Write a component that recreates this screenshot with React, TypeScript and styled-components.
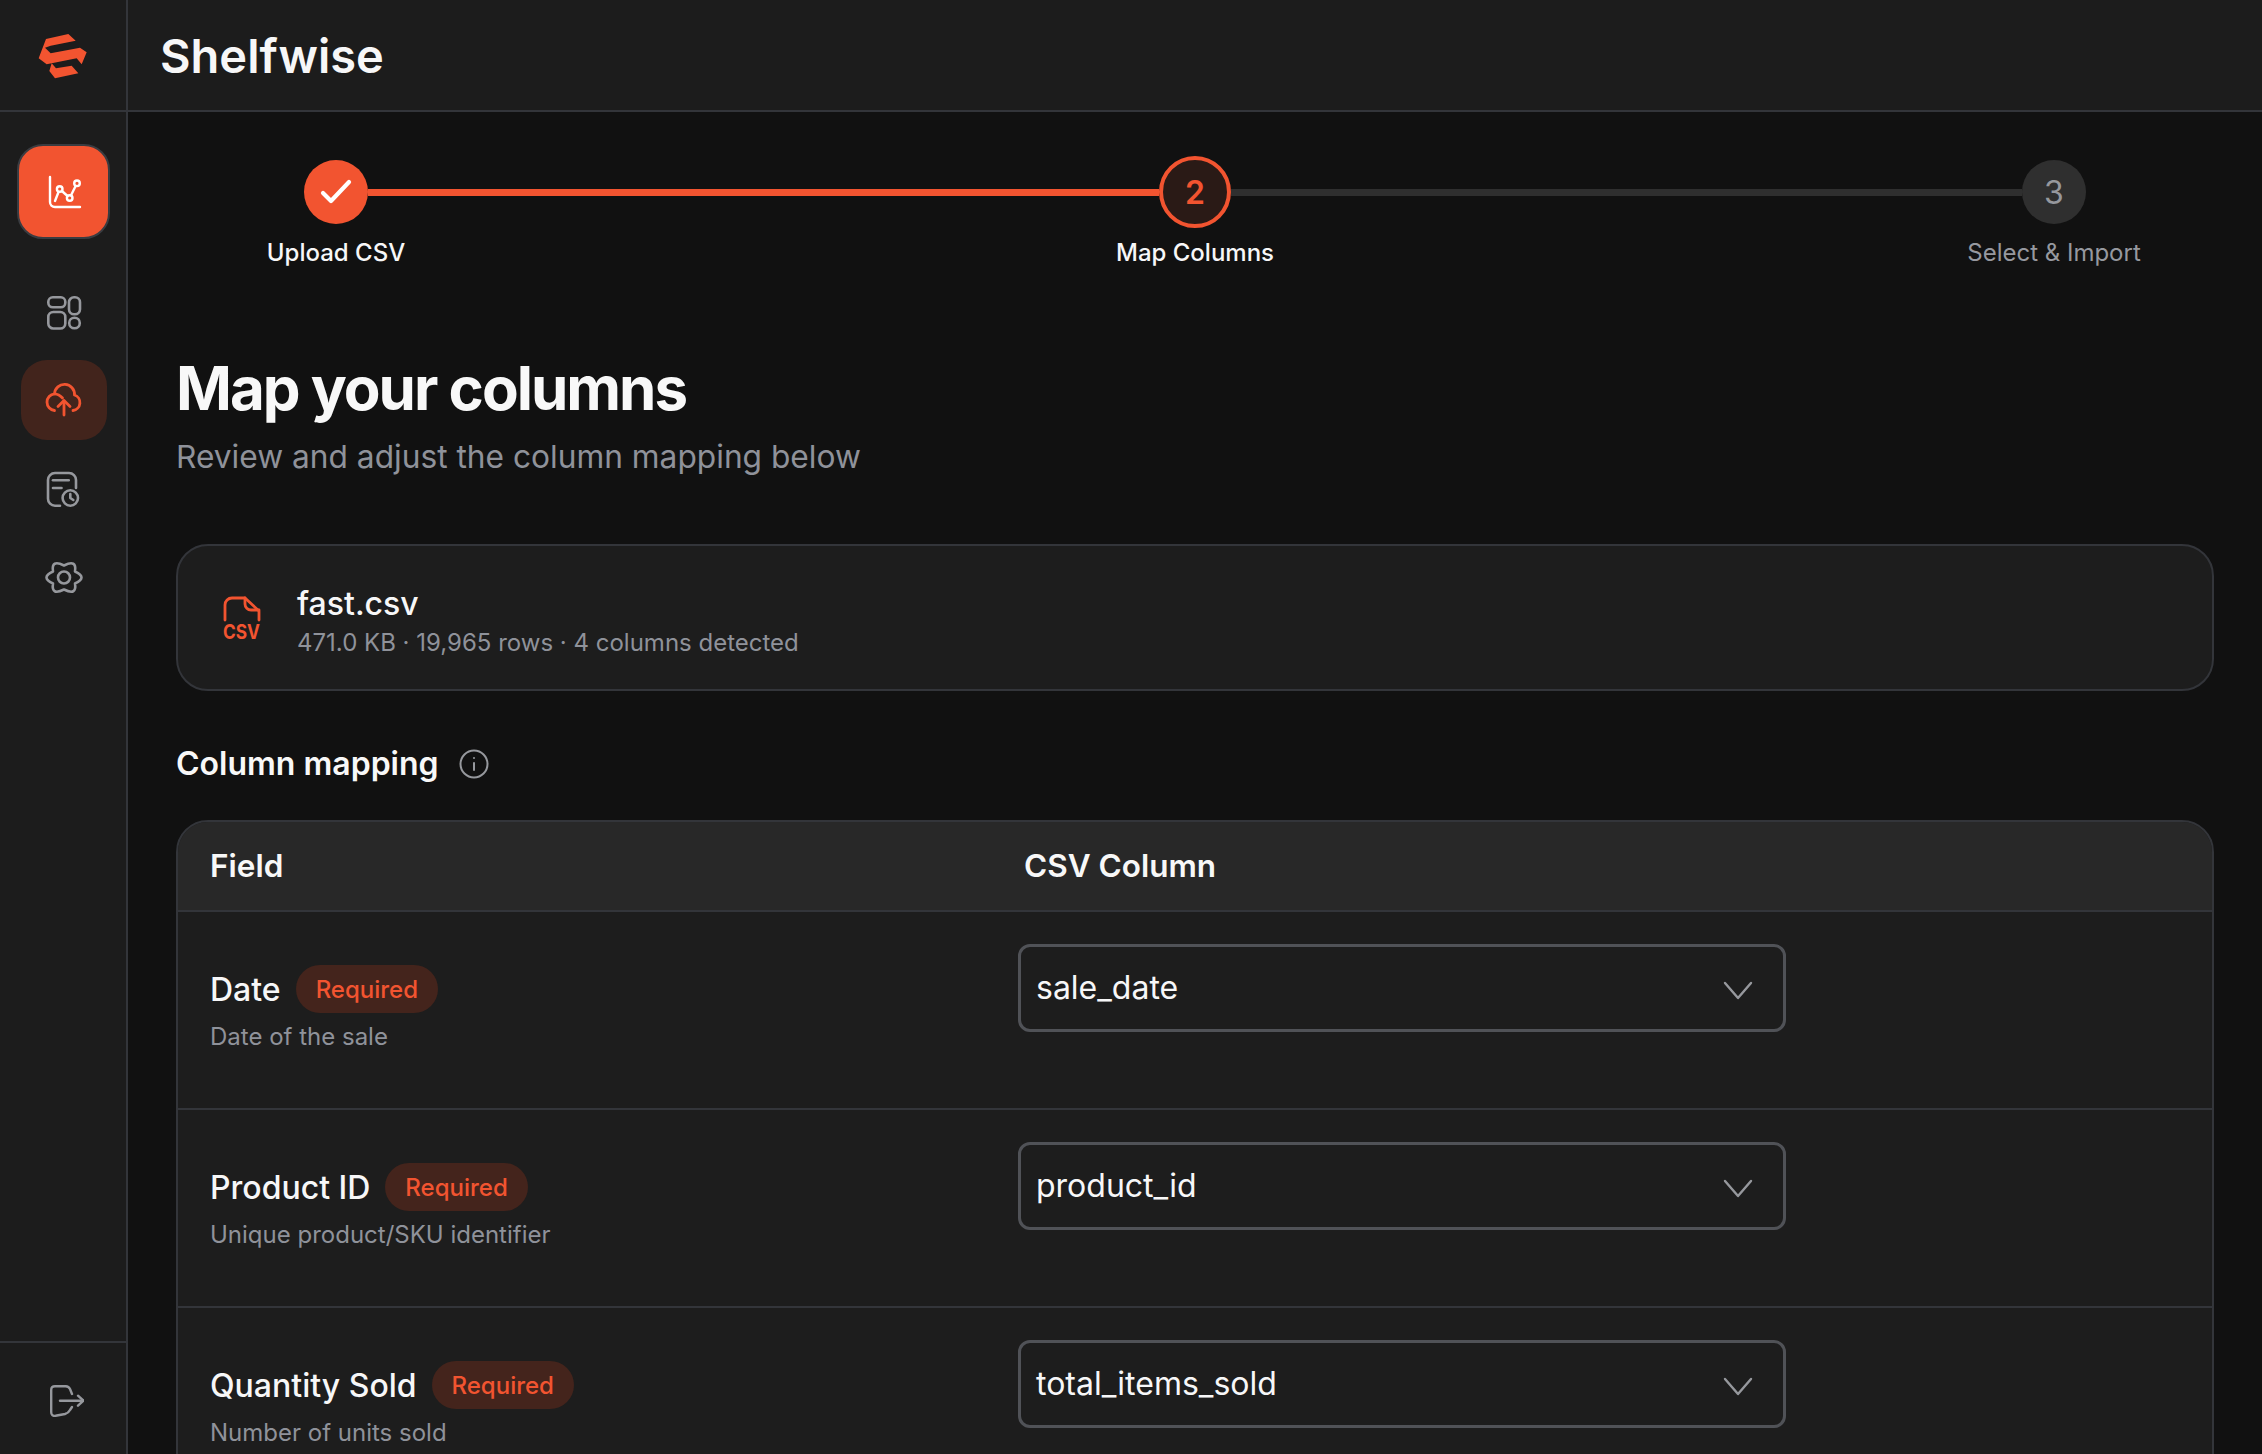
import styled, { createGlobalStyle } from "styled-components";

const ACCENT = "#f25430";

const GlobalStyle = createGlobalStyle`
    html, body {
        margin: 0;
        height: 100%;
        background: #111111;
        overflow: hidden;
        font-family: Inter, "Noto Sans", sans-serif;
    }
    * { box-sizing: border-box; }
`;

const Shell = styled.div`
    display: flex;
    height: 100vh;
    overflow: hidden;
`;

const Sidebar = styled.aside`
    display: flex;
    flex-direction: column;
    flex: 0 0 128px;
    background: #1c1c1c;
    border-right: 2px solid #33353a;
`;

const LogoCell = styled.div`
    display: flex;
    flex: 0 0 112px;
    align-items: center;
    justify-content: center;
    border-bottom: 2px solid #33353a;
`;

const Nav = styled.nav`
    display: flex;
    flex: 1;
    flex-direction: column;
    align-items: center;
    padding: 32px 0 0 1px;
`;

const NavButton = styled.div<{ $state?: "primary" | "active" }>`
    display: flex;
    align-items: center;
    justify-content: center;
    color: ${(p) => (p.$state === "primary" ? "#ffffff" : p.$state === "active" ? ACCENT : "#96989d")};
    background: ${(p) => (p.$state === "primary" ? ACCENT : p.$state === "active" ? "#42241c" : "transparent")};
    border: ${(p) => (p.$state === "primary" ? "2px solid #3a3c41" : "none")};
    border-radius: 26px;
    width: ${(p) => (p.$state === "primary" ? "93px" : "86px")};
    height: ${(p) => (p.$state === "primary" ? "95px" : p.$state === "active" ? "80px" : "88px")};
    margin-bottom: ${(p) => (p.$state === "primary" ? "30px" : p.$state === "active" ? "5px" : "0")};
    margin-top: ${(p) => (p.$state === "active" ? "3px" : "0")};

    svg {
        margin-left: ${(p) => (p.$state === "primary" ? "3px" : "0")};
        overflow: visible;
    }
`;

const SidebarFooter = styled.div`
    display: flex;
    flex: 0 0 113px;
    align-items: center;
    justify-content: center;
    padding: 4px 0 0 8px;
    border-top: 2px solid #33353a;
    color: #96989d;
`;

const Main = styled.main`
    display: flex;
    flex: 1;
    flex-direction: column;
    min-width: 0;
`;

const TopBar = styled.header`
    display: flex;
    flex: 0 0 112px;
    align-items: center;
    padding-left: 32px;
    background: #1c1c1c;
    border-bottom: 2px solid #33353a;
`;

const Brand = styled.h1`
    margin: 0;
    color: #f7f7f8;
    font-size: 47px;
    font-weight: 600;
    letter-spacing: 0;
`;

const Content = styled.div`
    display: flex;
    flex: 1;
    flex-direction: column;
    padding: 44px 48px 0;
    overflow: hidden;

    & > * {
        flex-shrink: 0;
    }
`;

const Stepper = styled.div`
    display: flex;
    flex-direction: column;
    margin-bottom: 87px;
`;

const Track = styled.div`
    display: flex;
    align-items: center;
    padding: 0 128px;
`;

const StepCircle = styled.div<{ $state: "done" | "current" | "todo" }>`
    display: flex;
    flex: none;
    align-items: center;
    justify-content: center;
    width: ${(p) => (p.$state === "current" ? "72px" : "64px")};
    height: ${(p) => (p.$state === "current" ? "72px" : "64px")};
    border-radius: 50%;
    font-size: 32px;
    font-weight: ${(p) => (p.$state === "current" ? 600 : 400)};
    color: ${(p) => (p.$state === "done" ? "#fff" : p.$state === "current" ? ACCENT : "#96989d")};
    background: ${(p) => (p.$state === "done" ? ACCENT : p.$state === "current" ? "#2a1a16" : "#2f2f2f")};
    border: ${(p) => (p.$state === "current" ? `4px solid ${ACCENT}` : "none")};
`;

const TrackLine = styled.div<{ $done?: boolean }>`
    flex: 1;
    height: 7px;
    background: ${(p) => (p.$done ? ACCENT : "#2f2f2f")};
`;

const StepLabels = styled.div`
    display: flex;
    justify-content: space-between;
    padding: 0 70px;
    margin-top: 10px;
`;

const StepLabel = styled.div<{ $muted?: boolean }>`
    display: flex;
    justify-content: center;
    width: 180px;
    color: ${(p) => (p.$muted ? "#96989f" : "#f7f7f8")};
    font-size: 24px;
    font-weight: ${(p) => (p.$muted ? 400 : 500)};
    line-height: 29px;
    white-space: nowrap;
`;

const Title = styled.h2`
    margin: 0;
    color: #f8f8f8;
    font-size: 60px;
    font-weight: 700;
    line-height: 68px;
    letter-spacing: -2px;
`;

const Subtitle = styled.p`
    margin: 15px 0 0;
    color: #8f929a;
    font-size: 31.7px;
    line-height: 40px;
`;

const FileCard = styled.section`
    display: flex;
    align-items: center;
    gap: 36px;
    height: 147px;
    margin-top: 67px;
    padding-left: 45px;
    background: #1d1d1d;
    border: 2px solid #33353a;
    border-radius: 32px;
`;

const FileText = styled.div`
    padding-top: 8px;
`;

const FileName = styled.div`
    color: #f7f7f8;
    font-size: 32px;
    font-weight: 500;
    line-height: 40px;
`;

const FileMeta = styled.div`
    margin-top: 3px;
    color: #8f929a;
    font-size: 24px;
    line-height: 32px;
`;

const SectionHead = styled.div`
    display: flex;
    align-items: center;
    gap: 20px;
    height: 40px;
    margin-top: 53px;
    color: #96989d;
`;

const SectionTitle = styled.h3`
    margin: 0;
    color: #f8f8f8;
    font-size: 32px;
    font-weight: 600;
    line-height: 40px;
`;

const Table = styled.section`
    margin-top: 36px;
    background: #1d1d1d;
    border: 2px solid #33353a;
    border-radius: 32px 32px 0 0;
    overflow: hidden;
`;

const TableHead = styled.div`
    display: grid;
    grid-template-columns: 814px 1fr;
    align-items: center;
    height: 90px;
    padding: 0 0 2px 32px;
    background: #282828;
    border-bottom: 2px solid #33353a;
`;

const HeadCell = styled.div`
    color: #f8f8f8;
    font-size: 31.5px;
    font-weight: 600;
`;

const Row = styled.div`
    display: grid;
    grid-template-columns: 808px 768px;
    height: 198px;
    padding: 32px 0 0 32px;
    border-bottom: 2px solid #33353a;
`;

const FieldLine = styled.div`
    display: flex;
    align-items: center;
    gap: 15px;
    height: 48px;
    margin-top: 21px;
`;

const FieldName = styled.div`
    color: #f7f7f8;
    font-size: 32px;
    font-weight: 500;
`;

const Badge = styled.span`
    display: inline-flex;
    align-items: center;
    height: 48px;
    padding: 0 20px;
    color: ${ACCENT};
    background: #44241c;
    border-radius: 24px;
    font-size: 24px;
    font-weight: 500;
`;

const FieldHint = styled.div`
    margin-top: 8px;
    color: #8f929a;
    font-size: 24px;
    line-height: 32px;
`;

const Select = styled.div`
    display: flex;
    align-items: center;
    justify-content: space-between;
    height: 88px;
    padding: 0 30px 2px 15px;
    color: #f7f7f8;
    background: #1d1d1d;
    border: 3px solid #505257;
    border-radius: 12px;
    font-size: 32px;
`;

const Chevron = styled.svg`
    flex: none;
    margin-top: 6px;
    color: #96989d;
`;

const Glyph = ({ w, h, sw, children }: { w: number; h: number; sw: number; children: React.ReactNode }) => (
    <svg width={w} height={h} viewBox={`0 0 ${w} ${h}`} fill="none" stroke="currentColor" strokeWidth={sw} strokeLinecap="round" strokeLinejoin="round">
        {children}
    </svg>
);

const fields = [
    { name: "Date", hint: "Date of the sale", column: "sale_date" },
    { name: "Product ID", hint: "Unique product/SKU identifier", column: "product_id" },
    { name: "Quantity Sold", hint: "Number of units sold", column: "total_items_sold" },
];

export default function App() {
    return (
        <>
            <GlobalStyle />
            <Shell>
                <Sidebar>
                    <LogoCell>
                        <svg width="66" height="60" viewBox="0 0 198 180" fill={ACCENT}>
                            <path d="M48 42 L115 27 L137 47 L62 62 L45 68 L62 85 L150 68 L170 82 L155 118 L140 100 L50 118 L26 100 Z" />
                            <path d="M65 115 L78 130 L125 122 L145 145 L75 160 L58 138 Z" />
                        </svg>
                    </LogoCell>
                    <Nav>
                        <NavButton $state="primary">
                            <Glyph w={34} h={34} sw={2.4}>
                                <path d="M2 2v25a5 5 0 0 0 5 5h25" />
                                <path d="M7 26l4.700-12 10 9L29 8.300" />
                                <circle cx="11.700" cy="14" r="2.800" fill={ACCENT} />
                                <circle cx="21.700" cy="23" r="2.800" fill={ACCENT} />
                                <circle cx="29" cy="8.300" r="2.800" fill={ACCENT} />
                            </Glyph>
                        </NavButton>
                        <NavButton>
                            <Glyph w={34} h={34} sw={2.6}>
                                <rect x="1.300" y="1.300" width="17" height="10" rx="4.500" />
                                <rect x="1.300" y="16" width="17" height="16.500" rx="5" />
                                <rect x="22" y="1.300" width="11" height="17" rx="5" />
                                <circle cx="27.500" cy="27" r="5.300" />
                            </Glyph>
                        </NavButton>
                        <NavButton $state="active">
                            <Glyph w={36} h={34} sw={2.8}>
                                <path d="M8.500 27.500a8.400 8.400 0 0 1 0-16.700A10 10 0 0 1 28.500 12a8 8 0 0 1-1.500 15.500" />
                                <path d="M8.500 10.800q4.500.2 8 4.200" />
                                <path d="M18 32V18" />
                                <path d="M12 23.500l6-6 6 6" />
                            </Glyph>
                        </NavButton>
                        <NavButton>
                            <Glyph w={33} h={35} sw={2.6}>
                                <path d="M13 33.700H8a7 7 0 0 1-7-7V8a7 7 0 0 1 7-7h14a7 7 0 0 1 7 7v8" />
                                <path d="M6 8.300h15.700" />
                                <path d="M6 16h8.500" />
                                <circle cx="23.300" cy="26" r="7.700" />
                                <path d="M23.300 22v4l3 2" />
                            </Glyph>
                        </NavButton>
                        <NavButton>
                            <Glyph w={36} h={33} sw={2.6}>
                                <path d="M18 4.500Q31-2 29 10.500 42 16.500 29 22.500 31 35 18 28.500 5 35 7 22.500-6 16.500 7 10.500 5-2 18 4.500Z" />
                                <circle cx="18" cy="16.500" r="6" />
                            </Glyph>
                        </NavButton>
                    </Nav>
                    <SidebarFooter>
                        <Glyph w={34} h={32} sw={2.4}>
                            <path d="M22 9l-2-5q-1.500-3-5-2.800H5Q1.200 1.200 1.200 5v22q0 4.500 4.300 3.800L15 29q3.500-1 5-4l2-3" />
                            <path d="M10 15.700h23.500" />
                            <path d="M28 10.700l5.500 5-5.500 5" />
                        </Glyph>
                    </SidebarFooter>
                </Sidebar>
                <Main>
                    <TopBar>
                        <Brand>Shelfwise</Brand>
                    </TopBar>
                    <Content>
                        <Stepper>
                            <Track>
                                <StepCircle $state="done">
                                    <svg width="32" height="26" viewBox="0 0 32 26" fill="none" stroke="#fff" strokeWidth="4.200" strokeLinecap="round" strokeLinejoin="round">
                                        <path d="M3 14l8 8L29 3" />
                                    </svg>
                                </StepCircle>
                                <TrackLine $done />
                                <StepCircle $state="current">2</StepCircle>
                                <TrackLine />
                                <StepCircle $state="todo">3</StepCircle>
                            </Track>
                            <StepLabels>
                                <StepLabel>Upload CSV</StepLabel>
                                <StepLabel>Map Columns</StepLabel>
                                <StepLabel $muted>Select &amp; Import</StepLabel>
                            </StepLabels>
                        </Stepper>
                        <Title>Map your columns</Title>
                        <Subtitle>Review and adjust the column mapping below</Subtitle>
                        <FileCard>
                            <svg width="38" height="44" viewBox="0 0 38 44" fill="none" stroke={ACCENT} strokeWidth="2.800" strokeLinecap="round" strokeLinejoin="round">
                                <path d="M2 24V9a7 7 0 0 1 7-7h13l14 13v9" />
                                <path d="M22 2v6a6 6 0 0 0 6 6h8" />
                                <text x="0" y="43" fill={ACCENT} stroke="none" fontFamily="Inter, sans-serif" fontWeight="700" fontSize="20" textLength="37" lengthAdjust="spacingAndGlyphs">CSV</text>
                            </svg>
                            <FileText>
                                <FileName>fast.csv</FileName>
                                <FileMeta>471.0 KB · 19,965 rows · 4 columns detected</FileMeta>
                            </FileText>
                        </FileCard>
                        <SectionHead>
                            <SectionTitle>Column mapping</SectionTitle>
                            <Glyph w={30} h={30} sw={2}>
                                <circle cx="15" cy="15" r="13.500" />
                                <path d="M15 14v7" />
                                <path d="M15 9v.01" />
                            </Glyph>
                        </SectionHead>
                        <Table>
                            <TableHead>
                                <HeadCell>Field</HeadCell>
                                <HeadCell>CSV Column</HeadCell>
                            </TableHead>
                            {fields.map((field) => (
                                <Row key={field.name}>
                                    <div>
                                        <FieldLine>
                                            <FieldName>{field.name}</FieldName>
                                            <Badge>Required</Badge>
                                        </FieldLine>
                                        <FieldHint>{field.hint}</FieldHint>
                                    </div>
                                    <Select>
                                        {field.column}
                                        <Chevron width="30" height="30" viewBox="0 0 30 30" fill="none" stroke="currentColor" strokeWidth="2.400" strokeLinecap="round" strokeLinejoin="round">
                                            <path d="M2 8l13 15L28 8" />
                                        </Chevron>
                                    </Select>
                                </Row>
                            ))}
                        </Table>
                    </Content>
                </Main>
            </Shell>
        </>
    );
}
